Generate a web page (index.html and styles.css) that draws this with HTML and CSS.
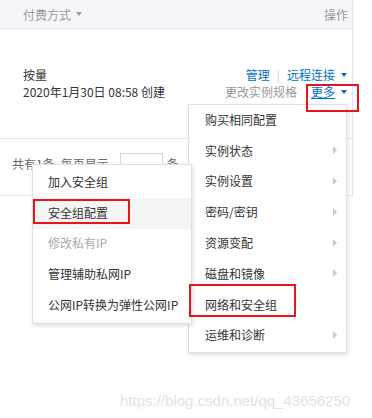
FILE: index.html
```html
<!DOCTYPE html>
<html lang="zh">
<head>
<meta charset="utf-8">
<link rel="stylesheet" href="styles.css">
</head>
<body>
<div class="page">
  <div class="table">
    <div class="thead">
      <span class="th">付费方式 <i class="caret gray"></i></span>
      <span class="th">操作</span>
    </div>
    <div class="row">
      <div class="info">
        <div>按量</div>
        <div>2020年1月30日 08:58 创建</div>
      </div>
      <div class="ops">
        <div class="op-line"><a class="link">管理</a><span class="sep">|</span><a class="link">远程连接</a><i class="caret blue"></i></div>
        <div class="op-line"><span class="muted">更改实例规格</span><a class="link more">更多</a><i class="caret blue"></i></div>
      </div>
    </div>
    <div class="foot">
      <span>共有1条, 每页显示</span><span class="select"></span><span>条</span>
    </div>
  </div>

  <ul class="menu menu-right">
    <li>购买相同配置</li>
    <li>实例状态<i class="arrow"></i></li>
    <li>实例设置<i class="arrow"></i></li>
    <li>密码/密钥<i class="arrow"></i></li>
    <li>资源变配<i class="arrow"></i></li>
    <li>磁盘和镜像<i class="arrow"></i></li>
    <li>网络和安全组</li>
    <li>运维和诊断<i class="arrow"></i></li>
  </ul>

  <ul class="menu menu-left">
    <li>加入安全组</li>
    <li class="hover">安全组配置</li>
    <li class="disabled">修改私有IP</li>
    <li>管理辅助私网IP</li>
    <li>公网IP转换为弹性公网IP</li>
  </ul>

  <div class="mark mark-more"></div>
  <div class="mark mark-net"></div>
  <div class="mark mark-sg"></div>

  <div class="watermark">https://blog.csdn.net/qq_43656250</div>
</div>
</body>
</html>
```

FILE: styles.css
```css
* { box-sizing: border-box; }
html, body { margin: 0; padding: 0; background: #fff; }
body {
  font-family: "Noto Sans CJK SC", "Noto Sans", sans-serif;
  font-size: 12px;
  color: #333;
}
.page { position: relative; width: 372px; height: 418px; overflow: hidden; }

.table { width: 353px; border-right: 1px solid #e3e5ea; }
.thead {
  height: 29px;
  background: #f5f6fa;
  border-bottom: 1px solid #e3e5ea;
  display: flex;
  justify-content: space-between;
  align-items: center;
  padding: 0 4px 0 23px;
  color: #999;
}
.th { display: flex; align-items: center; gap: 5px; }

.caret {
  display: inline-block;
  width: 0; height: 0;
  border-left: 3.5px solid transparent;
  border-right: 3.5px solid transparent;
  border-top: 4px solid #999;
}
.caret.blue { border-top-color: #0070cc; margin-left: 6px; }

.row {
  height: 110px;
  border-bottom: 1px solid #e3e5ea;
  display: flex;
  justify-content: space-between;
  align-items: flex-start;
  padding: 37px 5px 0 23px;
  line-height: 17px;
}
.ops { display: flex; flex-direction: column; align-items: flex-end; }
.op-line { display: flex; align-items: center; }
.link { color: #0070cc; }
.sep { color: #ccc; margin: 0 7px; }
.muted { color: #999; }
.more { text-decoration: underline; margin-left: 14px; }

.foot {
  height: 57px;
  border-bottom: 1px solid #e3e5ea;
  display: flex;
  align-items: flex-start;
  padding: 16px 0 0 12px;
  color: #666;
  line-height: 17px;
}
.select {
  width: 43px; height: 20px;
  border: 1px solid #d4d6dc;
  margin: -2px 4px 0 11px;
}

.menu {
  position: absolute;
  margin: 0;
  padding: 0;
  list-style: none;
  background: #fff;
  border: 1px solid #e1e1e1;
  box-shadow: 1px 2px 4px rgba(0,0,0,0.12);
}
.menu li {
  height: 30.8px;
  display: flex;
  align-items: center;
  justify-content: space-between;
  color: #333;
  white-space: nowrap;
}
.menu-right { left: 188px; top: 104px; width: 159px; padding: 0 0 1px; }
.menu-right li { padding: 0 9px 2px 16px; }
.menu-left { left: 32px; top: 164px; width: 160px; z-index: 2; padding: 2px 0; }
.menu-left li { padding: 0 0 2px 15px; }
.menu-left li.hover { background: #f5f5f5; }
.menu-left li.disabled { color: #aaa; }

.arrow {
  display: inline-block;
  width: 0; height: 0;
  border-top: 4px solid transparent;
  border-bottom: 4px solid transparent;
  border-left: 4px solid #c8c8c8;
}

.mark {
  position: absolute;
  border: 2px solid #e8141c;
  z-index: 3;
}
.mark-more { left: 306px; top: 84px; width: 53px; height: 28px; }
.mark-net { left: 189px; top: 284px; width: 107px; height: 33px; }
.mark-sg { left: 33px; top: 199px; width: 97px; height: 25px; }

.watermark {
  position: absolute;
  left: 120px;
  top: 392px;
  font-family: "Liberation Sans", Arial, sans-serif;
  font-size: 15px;
  color: #e2e2e2;
  white-space: nowrap;
}
```
